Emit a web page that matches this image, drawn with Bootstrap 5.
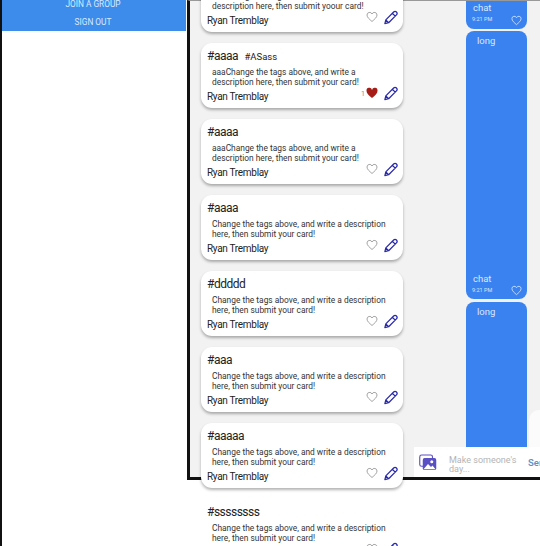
<!DOCTYPE html>
<html lang="en"><head><meta charset="utf-8"><title>Feed</title>
<link rel="stylesheet" href="https://cdn.jsdelivr.net/npm/bootstrap@5.3.0/dist/css/bootstrap.min.css">
<style>
html,body{margin:0;height:546px;overflow:hidden;background:#fff;font-family:"Roboto","Liberation Sans",sans-serif;color:#222}
.stage{width:540px;height:546px;overflow:hidden}
.side{width:187px;height:546px;flex:none;border-left:2px solid #111}
.side-menu{height:31px;background:#3d8bea;color:#d8ebff;font-size:8.3px;text-align:center;margin-right:1px}
.side-menu div{height:18px;line-height:18px;margin-right:2px}
.side-menu div:first-child{height:13px;line-height:8px}
.frame{width:353px;height:480px;flex:none;background:#f2f2f2;border-left:3px solid #111;border-top:1px solid #999;border-bottom:3px solid #111;position:relative}
.feed{width:202px;margin-left:11px;margin-top:-34px;flex:none;position:relative;z-index:2}
.post{height:65px;margin-bottom:11px;background:#fff;border-radius:11px;box-shadow:0 2px 3px rgba(0,0,0,.3);padding:5px 6px 0 6px;position:relative}
.post.flat{box-shadow:none;background:transparent}
.tag{font-size:12px;letter-spacing:-.5px;line-height:16px;height:20px}
.tag small{font-size:9.5px;letter-spacing:0;margin-left:4px}
.copy{font-size:8.4px;line-height:9.5px;margin-left:5px;color:#333;height:20px;width:186px;white-space:nowrap}
.who{font-size:10px;letter-spacing:-.3px;line-height:13px;margin-top:2px}
.ico-heart{width:12px;height:12px;color:#999;margin-top:-2px;margin-left:1px}
.ico-heart.on{color:#a61d17}
.ico-pen{width:15px;height:16px;color:#2a2aa8}
.acts{position:absolute;right:5px;bottom:6px;gap:5px}
.count{font-size:7px;color:#888;margin-right:-5px}
.chat{width:61px;margin-left:63px;flex:none}
.bubble{background:#3a82f0;color:#d8e8ff;font-size:9.5px;position:relative}
.b1{height:28px;border-radius:0 0 8px 8px;padding-left:7px;line-height:14px;margin-bottom:2px}
.b2{height:268px;border-radius:8px;padding:3px 0 0 11px;margin-bottom:3px}
.b3{height:145px;border-radius:8px 8px 0 0;padding:3px 0 0 11px}
.late{position:absolute;left:7px;bottom:13px}
.stamp{position:absolute;left:6px;bottom:5px;font-size:5.5px}
.b1 .stamp{bottom:3px}
.bubble svg{position:absolute;right:5px;bottom:3px;width:11px;height:11px;color:#d8e8ff}
.compose{position:absolute;left:224px;top:446px;width:126px;height:30px;background:#fff;overflow:hidden;z-index:1}
.compose svg{width:18px;height:17px;flex:none;margin:0 12px 0 5px}
.hint{font-size:9px;line-height:9.5px;color:#b4b4b4;width:70px;flex:none;margin-top:6px}
.send{font-size:9.5px;font-weight:600;color:#5b93c9;margin-left:9px;margin-top:3px;white-space:nowrap}
.blob{position:absolute;left:339px;top:409px;width:11px;height:37px;background:#fbfbfb;border-radius:10px 0 0 0}
</style></head><body>
<svg width="0" height="0" class="d-block position-absolute"><defs>
<symbol id="heart" viewBox="0 0 24 24"><path d="M12 21C7 16.500 2 12.800 2 8a5.200 5.200 0 0 1 10-2 5.200 5.200 0 0 1 10 2c0 4.800-5 8.500-10 13z" fill="none" stroke="currentColor" stroke-width="1.800"/></symbol>
<symbol id="heartfill" viewBox="0 0 24 24"><path d="M12 22C6 17 1 13 1 7.800a5.600 5.600 0 0 1 11-2 5.600 5.600 0 0 1 11 2C23 13 18 17 12 22z" fill="currentColor"/></symbol>
<symbol id="pen" viewBox="0 0 24 24"><path d="M3 21l1.500-6L17 2.500a2.600 2.600 0 0 1 4.500 4.500L9 19.500zM15 4.500l4.500 4.500M4.500 15L9 19.500" fill="none" stroke="currentColor" stroke-width="2" stroke-linejoin="round"/></symbol>
</defs></svg>
<div class="stage d-flex">
<aside class="side"><div class="side-menu"><div>JOIN A GROUP</div><div>SIGN OUT</div></div></aside>
<main class="frame d-flex">
<section class="feed">
<article class="post"><div class="tag">#aaaa</div><div class="copy">aaaChange the tags above, and write a<br>description here, then submit yoour card!</div><div class="who">Ryan Tremblay</div><div class="acts d-flex align-items-center"><svg class="ico-heart"><use href="#heart"/></svg><svg class="ico-pen"><use href="#pen"/></svg></div></article>
<article class="post"><div class="tag">#aaaa <small>#ASass</small></div><div class="copy">aaaChange the tags above, and write a<br>description here, then submit your card!</div><div class="who">Ryan Tremblay</div><div class="acts d-flex align-items-center"><span class="count">1</span><svg class="ico-heart on"><use href="#heartfill"/></svg><svg class="ico-pen"><use href="#pen"/></svg></div></article>
<article class="post"><div class="tag">#aaaa</div><div class="copy">aaaChange the tags above, and write a<br>description here, then submit your card!</div><div class="who">Ryan Tremblay</div><div class="acts d-flex align-items-center"><svg class="ico-heart"><use href="#heart"/></svg><svg class="ico-pen"><use href="#pen"/></svg></div></article>
<article class="post"><div class="tag">#aaaa</div><div class="copy">Change the tags above, and write a description<br>here, then submit your card!</div><div class="who">Ryan Tremblay</div><div class="acts d-flex align-items-center"><svg class="ico-heart"><use href="#heart"/></svg><svg class="ico-pen"><use href="#pen"/></svg></div></article>
<article class="post"><div class="tag">#ddddd</div><div class="copy">Change the tags above, and write a description<br>here, then submit your card!</div><div class="who">Ryan Tremblay</div><div class="acts d-flex align-items-center"><svg class="ico-heart"><use href="#heart"/></svg><svg class="ico-pen"><use href="#pen"/></svg></div></article>
<article class="post"><div class="tag">#aaa</div><div class="copy">Change the tags above, and write a description<br>here, then submit your card!</div><div class="who">Ryan Tremblay</div><div class="acts d-flex align-items-center"><svg class="ico-heart"><use href="#heart"/></svg><svg class="ico-pen"><use href="#pen"/></svg></div></article>
<article class="post"><div class="tag">#aaaaa</div><div class="copy">Change the tags above, and write a description<br>here, then submit your card!</div><div class="who">Ryan Tremblay</div><div class="acts d-flex align-items-center"><svg class="ico-heart"><use href="#heart"/></svg><svg class="ico-pen"><use href="#pen"/></svg></div></article>
<article class="post flat"><div class="tag">#ssssssss</div><div class="copy">Change the tags above, and write a description<br>here, then submit your card!</div><div class="acts d-flex align-items-center"><svg class="ico-heart"><use href="#heart"/></svg><svg class="ico-pen"><use href="#pen"/></svg></div></article>
</section>
<section class="chat">
<div class="bubble b1">chat<span class="stamp">9:21 PM</span><svg><use href="#heart"/></svg></div>
<div class="bubble b2">long<span class="late">chat</span><span class="stamp">9:21 PM</span><svg><use href="#heart"/></svg></div>
<div class="bubble b3">long</div>
</section>
<div class="blob"></div>
<div class="compose d-flex align-items-center">
<svg viewBox="0 0 24 22"><rect x="1" y="1" width="17" height="15" rx="2.500" fill="none" stroke="#5a4fc4" stroke-width="1.500"/><rect x="5" y="5" width="18" height="16" rx="2.500" fill="#5a4fc4"/><circle cx="17" cy="10" r="2" fill="#fff"/><path d="M6 20l6-7 4 4 2-2 4 5z" fill="#fff"/></svg>
<div class="hint">Make someone's day...</div><div class="send">Send</div></div>
</main>
</div>
</body></html>
